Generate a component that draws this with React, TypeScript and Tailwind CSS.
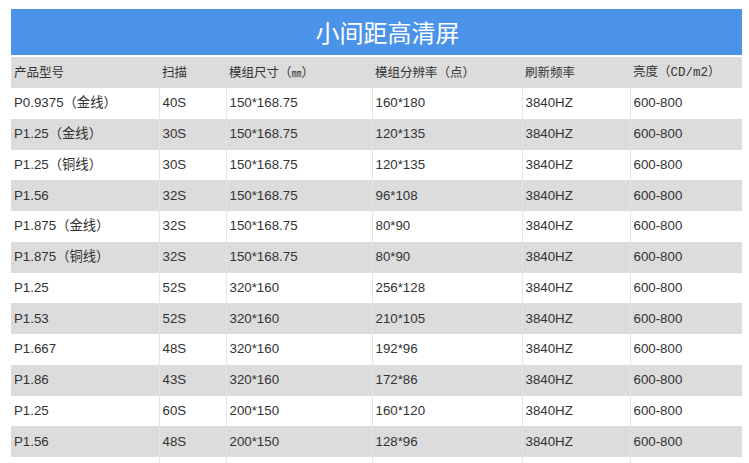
import * as React from 'react'

const cols = ['w-[148px]', 'w-[67px]', 'w-[146px]', 'w-[150px]', 'w-[108px]', 'w-[112px]']

const head: React.ReactNode[] = [
    '产品型号',
    '扫描',
    <>模组尺寸（<span className="text-[10px]">㎜</span>）</>,
    '模组分辨率（点）',
    '刷新频率',
    <>亮度（<span style={{fontFamily: '"Liberation Mono", monospace'}}>CD/m2</span>）</>,
]

const rows: string[][] = [
    ['P0.9375（金线）', '40S', '150*168.75', '160*180'],
    ['P1.25（金线）', '30S', '150*168.75', '120*135'],
    ['P1.25（铜线）', '30S', '150*168.75', '120*135'],
    ['P1.56', '32S', '150*168.75', '96*108'],
    ['P1.875（金线）', '32S', '150*168.75', '80*90'],
    ['P1.875（铜线）', '32S', '150*168.75', '80*90'],
    ['P1.25', '52S', '320*160', '256*128'],
    ['P1.53', '52S', '320*160', '210*105'],
    ['P1.667', '48S', '320*160', '192*96'],
    ['P1.86', '43S', '320*160', '172*86'],
    ['P1.25', '60S', '200*150', '160*120'],
    ['P1.56', '48S', '200*150', '128*96'],
]

const font = {fontFamily: '"Liberation Sans", Arial, "Noto Sans CJK SC", sans-serif'}
const cjk = {fontFamily: '"Noto Sans CJK SC", sans-serif'}

export default function App() {
    return (
        <div className="h-[463px] w-[749px] overflow-hidden bg-white pl-[11px] pt-[9px]" style={font}>
            <div className="w-[731px]">
                <div className="flex h-[46px] items-center justify-center bg-[#4b93e8] pl-[22px] text-[24px] text-white" style={cjk}>
                    小间距高清屏
                </div>
                <div className="h-[2px] bg-white" />
                <table className="w-[731px] table-fixed border-collapse text-[13.3px] text-[#333]">
                    <colgroup>
                        {cols.map((c, i) => <col key={i} className={c} />)}
                    </colgroup>
                    <thead>
                        <tr className="h-[31px] bg-[#dcdcdc]">
                            {head.map((h, i) => (
                                <th key={i} className="pl-[3px] text-left align-middle text-[12.5px] font-normal text-[#333]" style={cjk}>
                                    {h}
                                </th>
                            ))}
                        </tr>
                    </thead>
                    <tbody>
                        {rows.map((r, i) => (
                            <tr key={i} className={i % 2 === 0 ? 'h-[30.75px] bg-white' : 'h-[30.75px] bg-[#dcdcdc]'}>
                                {[...r, '3840HZ', '600-800'].map((c, j) => (
                                    <td key={j} className="whitespace-nowrap border-x border-[#e4e4e4] pl-[3px] align-middle first:border-l-0 last:border-r-0">
                                        {c}
                                    </td>
                                ))}
                            </tr>
                        ))}
                        <tr className="h-[10px] bg-white">
                            {cols.map((_, j) => (
                                <td key={j} className="border-x border-[#e4e4e4] first:border-l-0 last:border-r-0" />
                            ))}
                        </tr>
                    </tbody>
                </table>
            </div>
        </div>
    )
}
